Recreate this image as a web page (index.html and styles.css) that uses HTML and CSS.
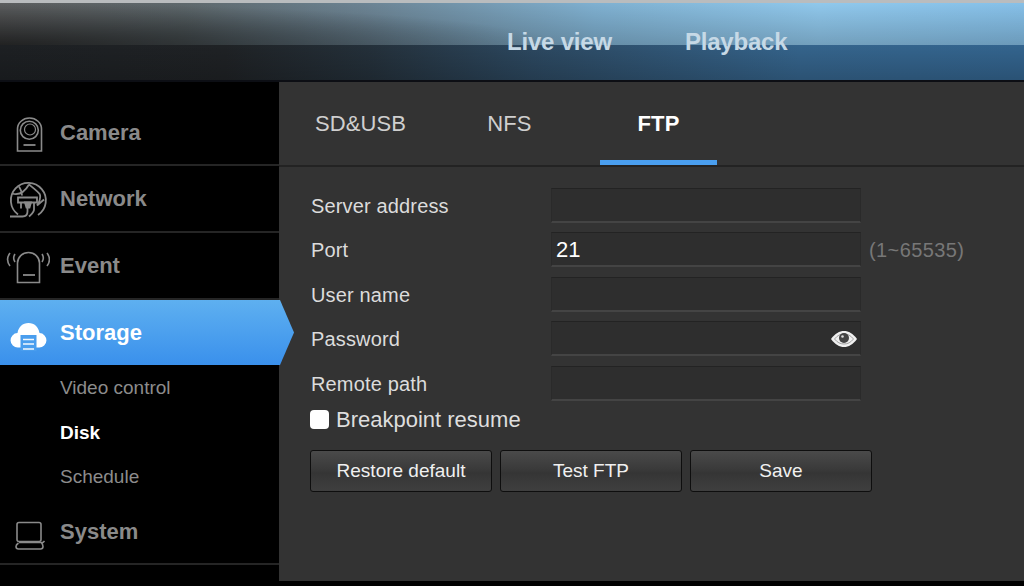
FILE: index.html
```html
<!DOCTYPE html>
<html lang="en">
<head>
<meta charset="utf-8">
<title>FTP settings</title>
<link rel="stylesheet" href="styles.css">
</head>
<body>
<div class="page">
  <header class="header">
    <nav class="topnav">
      <a class="topnav-link">Live view</a>
      <a class="topnav-link">Playback</a>
    </nav>
  </header>
  <div class="body">
    <aside class="sidebar">
      <div class="menu-item menu-camera">
        <span class="menu-icon">
          <svg width="44" height="40" viewBox="0 0 44 40" fill="none" stroke="#8a8a8a" stroke-width="1.600">
            <path d="M11.500 38V16a12 11 0 0 1 24 0v22z"/>
            <circle cx="23.300" cy="17.300" r="9"/>
            <circle cx="24" cy="16.500" r="5.500" stroke-width="1.200"/>
            <path d="M17.500 32h12" stroke-width="1.800"/>
          </svg>
        </span>
        <span>Camera</span>
      </div>
      <div class="menu-item">
        <span class="menu-icon">
          <svg width="44" height="40" viewBox="0 0 44 40" fill="none" stroke="#8a8a8a" stroke-width="1.800">
            <g transform="translate(0 1.500)">
              <path d="M12 34a17.500 17.500 0 1 1 20 .5"/>
              <path d="M6 13c7 2 13-2 17-9M23 4c5 4 9 7 11 10M13 6c2 3 3 5 3 9M34 14c1 5-1 8-3 11M38 19l-7 6"/>
              <path d="M12 17h19v5H12zM15 22v6M28 22v7c0 3-3 5-5 7"/>
              <path d="M19 22h6l-1.500 5h-3z" fill="#8a8a8a"/>
              <path d="M21.500 27v4c0 3-2 5-5 5H4"/>
            </g>
          </svg>
        </span>
        <span>Network</span>
      </div>
      <div class="menu-item">
        <span class="menu-icon">
          <svg width="44" height="40" viewBox="0 0 44 40" fill="none" stroke="#8a8a8a" stroke-width="1.600">
            <path d="M11.500 36.500V17a11 10.500 0 0 1 22 0v19.500z"/>
            <path d="M17 29h12" stroke-width="1.800"/>
            <path d="M4 7c-3 4-3 9 0 13M9 8c-2 3-2 5 0 8M41 7c3 4 3 9 0 13M36 8c2 3 2 5 0 8"/>
          </svg>
        </span>
        <span>Event</span>
      </div>
      <div class="menu-item menu-item-active">
        <span class="menu-icon">
          <svg width="44" height="40" viewBox="0 0 44 40">
            <path d="M12 34.500a7.200 7.200 0 0 1-.5-14.400c1-6 5-10 11-10s10 4 11 10a7.200 7.200 0 0 1-.5 14.400z" fill="#fff"/>
            <path d="M14.500 22h16v16h-16z" fill="#4a9eee"/>
            <path d="M17 26.500h11M17 31h11M17 36h11" stroke="#f4f9fe" stroke-width="1.600"/>
          </svg>
        </span>
        <span>Storage</span>
      </div>
      <ul class="submenu">
        <li class="submenu-item">Video control</li>
        <li class="submenu-item submenu-item-active">Disk</li>
        <li class="submenu-item">Schedule</li>
      </ul>
      <div class="menu-item menu-system">
        <span class="menu-icon">
          <svg width="44" height="40" viewBox="0 0 44 40" fill="none" stroke="#8a8a8a" stroke-width="1.600">
            <rect x="11" y="10.500" width="24" height="19" rx="2"/>
            <path d="M13 30.500h24l1.500-1.500"/>
            <path d="M12.500 31c-1.500 1-2.500 2.500-2.500 3.500 0 1.500 1 2.500 2.500 2.500h22c1.500 0 2.500-1 2.500-2.500 0-1-.5-2.500-1.500-4"/>
          </svg>
        </span>
        <span>System</span>
      </div>
    </aside>
    <main class="main">
      <div class="tabs">
        <div class="tab"><span class="tab-label">SD&amp;USB</span></div>
        <div class="tab"><span class="tab-label">NFS</span></div>
        <div class="tab tab-active"><span class="tab-label">FTP</span></div>
      </div>
      <form class="form">
        <div class="form-row">
          <label class="form-label">Server address</label>
          <input class="form-input" type="text">
        </div>
        <div class="form-row">
          <label class="form-label">Port</label>
          <input class="form-input" type="text" value="21">
          <span class="form-hint">(1~65535)</span>
        </div>
        <div class="form-row">
          <label class="form-label">User name</label>
          <input class="form-input" type="text">
        </div>
        <div class="form-row">
          <label class="form-label">Password</label>
          <span class="input-wrap">
            <input class="form-input" type="text">
            <svg class="eye" width="28" height="18" viewBox="0 0 28 18">
              <path d="M1 9C5 3.500 9.500 1 14 1s9 2.500 13 8c-4 5.500-8.500 8-13 8S5 14.500 1 9z" fill="#f0f0f0"/>
              <path d="M4.500 9C7.500 5.500 10 4 14 4s6.500 1.500 9.500 5c-3 3.500-5.500 5-9.500 5S7.500 12.500 4.500 9z" fill="#f0f0f0" stroke="#8d8d8d" stroke-width=".8"/>
              <circle cx="14" cy="8" r="5" fill="#444"/>
              <circle cx="12.500" cy="6.500" r="1.300" fill="#ddd"/>
            </svg>
          </span>
        </div>
        <div class="form-row">
          <label class="form-label">Remote path</label>
          <input class="form-input" type="text">
        </div>
        <label class="check-row">
          <input class="check" type="checkbox">
          <span>Breakpoint resume</span>
        </label>
        <div class="buttons">
          <button class="btn" type="button">Restore default</button>
          <button class="btn" type="button">Test FTP</button>
          <button class="btn" type="button">Save</button>
        </div>
      </form>
    </main>
  </div>
</div>
</body>
</html>
```

FILE: styles.css
```css
* { box-sizing: border-box; }
html, body { margin: 0; padding: 0; height: 100%; background: #000; overflow: hidden; }
body { font-family: "Liberation Sans", Arial, sans-serif; }
.page { width: 1024px; height: 586px; display: flex; flex-direction: column; background: #000; }

.header {
  height: 82px;
  flex: none;
  border-top: 3px solid #b9bcbe;
  border-bottom: 2px solid #0c0e14;
  display: flex;
  align-items: center;
  padding-left: 507px;
  background:
    linear-gradient(180deg, rgba(0,0,0,0), rgba(0,0,0,.18)) 0 42px / 100% 35px no-repeat,
    linear-gradient(90deg, #1d2023 0%, #1f2225 22%, #24303a 36%, #2c4860 52%, #35648c 78%, #33648e 100%) 0 42px / 100% 35px no-repeat,
    radial-gradient(ellipse 560px 42px at 0 42px, rgba(0,0,0,.55), rgba(0,0,0,0)) 0 0 / 100% 42px no-repeat,
    linear-gradient(180deg, rgba(0,0,0,0), rgba(0,0,0,.2)) 0 0 / 100% 42px no-repeat,
    linear-gradient(90deg, #5c5e5f 0%, #5e686c 18%, #6c8494 36%, #7fb0d0 58%, #90c8ec 80%, #86c0e8 100%);
}
.topnav { display: flex; gap: 73px; padding-top: 1px; }
.topnav-link { font-size: 24px; font-weight: 700; color: #c6d9e6; letter-spacing: -.2px; white-space: nowrap; }

.body { flex: 1; display: flex; min-height: 0; padding-bottom: 5px; }

.sidebar { width: 279px; flex: none; background: #000; display: flex; flex-direction: column; color: #8a8a8a; }
.menu-item {
  height: 67px;
  flex: none;
  display: flex;
  align-items: center;
  font-size: 22px;
  font-weight: 700;
  border-bottom: 2px solid #252525;
  padding-top: 1px;
}
.menu-camera { height: 84px; padding-top: 20px; }
.menu-icon { width: 60px; flex: none; display: flex; justify-content: flex-start; padding-left: 6px; }
.menu-item-active {
  width: 294px;
  height: 65px;
  border: 0;
  padding-top: 0;
  color: #fff;
  background: linear-gradient(180deg, #5eb0f0 0%, #3a90ec 100%);
  clip-path: polygon(0 0, 280px 0, 294px 50%, 280px 100%, 0 100%);
  position: relative;
  z-index: 1;
}
.submenu { list-style: none; margin: 0; padding: 1px 0 0 60px; height: 145px; flex: none; font-size: 19px; color: #8c8c8c; }
.submenu-item { height: 44.500px; display: flex; align-items: center; }
.submenu-item-active { color: #fff; font-weight: 700; }
.menu-system { height: 55px; padding-top: 0; padding-bottom: 10px; }

.main { flex: 1; background: #333; display: flex; flex-direction: column; min-width: 0; }
.tabs { height: 85px; flex: none; display: flex; padding-left: 7px; border-bottom: 2px solid #232323; }
.tab { width: 149px; flex: none; display: flex; justify-content: center; }
.tab-label {
  width: 117px;
  text-align: center;
  font-size: 22px;
  color: #cfcfcf;
  padding-top: 29px;
  letter-spacing: .1px;
}
.tab-active .tab-label { color: #fff; font-weight: 700; border-bottom: 5px solid #4a9ff0; }

.form { padding: 21px 0 0 32px; display: flex; flex-direction: column; }
.form-row { height: 44.400px; flex: none; display: flex; align-items: flex-start; }
.form-label { width: 240px; flex: none; font-size: 20px; color: #dcdcdc; line-height: 36px; letter-spacing: .15px; }
.form-input {
  width: 310px;
  height: 35px;
  flex: none;
  margin: 0;
  padding: 1px 3px 0 4px;
  background: #2e2e2e;
  border: 1px solid #2a2a2a;
  border-top-color: #232323;
  border-bottom: 2px solid #444;
  color: #fff;
  font: 22px "Liberation Sans", Arial, sans-serif;
  outline: none;
}
.input-wrap { position: relative; display: block; width: 310px; height: 35px; flex: none; }
.eye { position: absolute; right: 3px; top: 9px; }
.form-hint { font-size: 20px; color: #777; margin-left: 8px; line-height: 36px; letter-spacing: .4px; }

.check-row { display: flex; align-items: center; font-size: 22px; color: #dedede; height: 20px; }
.check {
  appearance: none;
  width: 19px;
  height: 19px;
  margin: 0 7px 0 -1px;
  border-radius: 4px;
  background: #fff;
  flex: none;
}
.buttons { display: flex; gap: 8px; margin-top: 20px; margin-left: -1px; }
.btn {
  width: 182px;
  height: 42px;
  padding: 0;
  border: 1px solid #0e0e0e;
  border-radius: 3px;
  background: linear-gradient(180deg, #4a4a4a 0%, #3a3a3a 45%, #353535 55%, #3f3f3f 100%);
  color: #f0f0f0;
  font: 19px "Liberation Sans", Arial, sans-serif;
}
```
